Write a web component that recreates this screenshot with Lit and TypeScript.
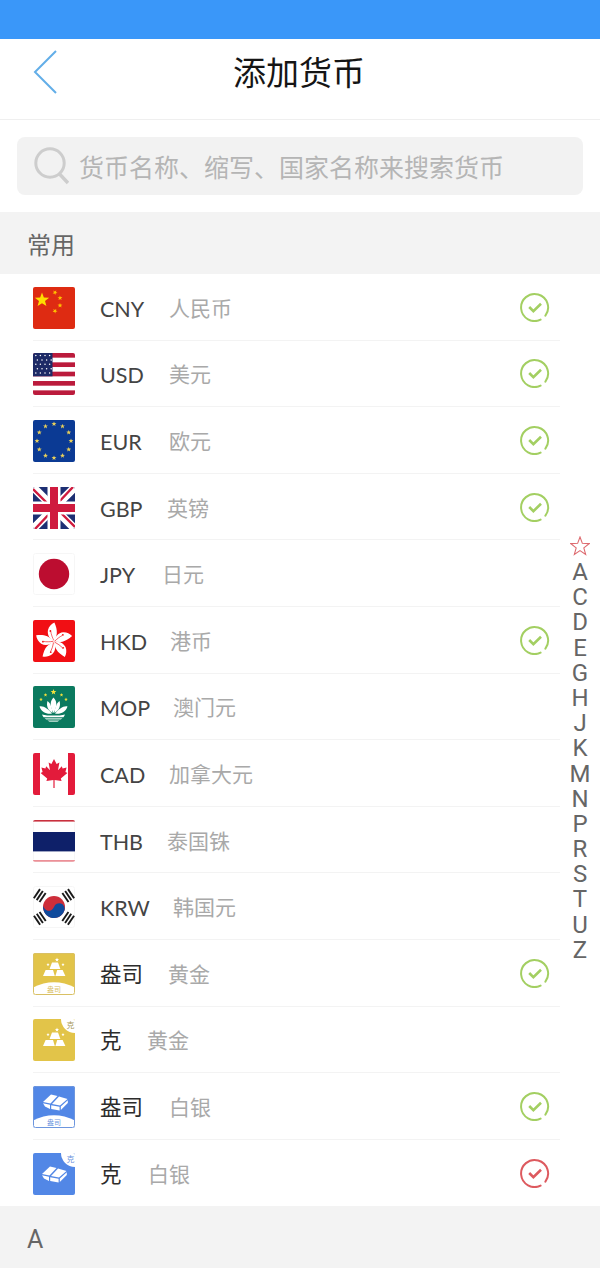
import { LitElement, html, css, svg } from 'lit';
import { customElement } from 'lit/decorators.js';

function starPoints(cx: number, cy: number, r: number, rot = -90) {
  const pts: string[] = [];
  for (let i = 0; i < 10; i++) {
    const rad = i % 2 === 0 ? r : r * 0.42;
    const a = ((rot + i * 36) * Math.PI) / 180;
    pts.push(`${(cx + rad * Math.cos(a)).toFixed(2)},${(cy + rad * Math.sin(a)).toFixed(2)}`);
  }
  return pts.join(' ');
}

const star = (cx: number, cy: number, r: number, fill: string, rot = -90) =>
  svg`<polygon points=${starPoints(cx, cy, r, rot)} fill=${fill}></polygon>`;

const cn = svg`
  <rect width="42" height="42" fill="#de2b12"></rect>
  ${star(9, 13, 7.5, '#ffde00')}
  ${star(22, 5.5, 2.6, '#ffc000', -60)}
  ${star(27, 11, 2.6, '#ffc000', -20)}
  ${star(27, 18.5, 2.6, '#ffc000', -90)}
  ${star(22, 24, 2.6, '#ffc000', -60)}`;

const usStars = () => {
  const out = [];
  for (let r = 0; r < 5; r++) {
    for (let c = 0; c < 4; c++) {
      out.push(svg`<circle cx=${2.8 + c * 4.6 + (r % 2 ? 1.6 : 0)} cy=${2.5 + r * 4.4} r="0.75" fill="#fff"></circle>`);
    }
  }
  return out;
};

const us = svg`
  <rect width="42" height="42" fill="#fff"></rect>
  ${[0, 2, 4, 6, 8].map((i) => svg`<rect y=${i * 4.67} width="42" height="4.67" fill="#bb1b3c"></rect>`)}
  <rect width="19.5" height="23.3" fill="#1d2a66"></rect>
  ${usStars()}`;

const euStars = () => {
  const out = [];
  for (let i = 0; i < 12; i++) {
    const a = (i * 30 * Math.PI) / 180;
    out.push(star(21 + 17 * Math.sin(a), 21 - 17 * Math.cos(a), 2.6, '#e8cf5a'));
  }
  return out;
};

const eu = svg`<rect width="42" height="42" fill="#0b3a94"></rect>${euStars()}`;

const gb = svg`
  <rect width="42" height="42" fill="#1d2f73"></rect>
  <path d="M0 0L42 42M42 0L0 42" stroke="#fff" stroke-width="8"></path>
  <path d="M0 2L17 19M42 40L25 23M40 0L24 17M2 42L18 25" stroke="#cf1b3f" stroke-width="2.4"></path>
  <path d="M21 0V42M0 21H42" stroke="#fff" stroke-width="13"></path>
  <path d="M21 0V42M0 21H42" stroke="#cf1b3f" stroke-width="8"></path>`;

const jp = svg`
  <rect x="0.5" y="0.5" width="41" height="41" rx="2" fill="#fff" stroke="#f6f6f6"></rect>
  <circle cx="21" cy="21" r="15.2" fill="#bc0d30"></circle>`;

const hkPetals = () => {
  const out = [];
  for (let i = 0; i < 5; i++) {
    out.push(svg`<g transform="rotate(${i * 72} 21 21.5)">
      <path d="M21 21.5C16.5 19 14 14.5 15 10C15.8 6.8 18.4 4 21.4 2.6C23 6.5 24.2 10 23.8 13.5C23.4 17 22.2 19 21 21.5Z" fill="#fff"></path>
      <path d="M20.8 20.5C19.4 17.5 18.2 14.5 17.8 11.5" stroke="#f10f14" stroke-width="0.6" fill="none"></path>
      <circle cx="17.4" cy="11" r="0.9" fill="#f10f14"></circle>
    </g>`);
  }
  return out;
};

const hk = svg`<rect width="42" height="42" fill="#f10f14"></rect>${hkPetals()}`;

const mo = svg`
  <rect width="42" height="42" fill="#0b7a5f"></rect>
  ${star(20.5, 6, 3, '#f6e23c')}
  ${star(12.5, 9, 1.9, '#f6e23c')}
  ${star(28.5, 9, 1.9, '#f6e23c')}
  ${star(8, 13.5, 1.9, '#f6e23c')}
  ${star(33, 13.5, 1.9, '#f6e23c')}
  <path d="M20.5 11.5C24 15 24.5 20 20.5 27C16.5 20 17 15 20.5 11.5Z" fill="#fff"></path>
  <path d="M14.5 15C17.5 17 19 22 19.6 27C15 24.5 13 20 14.5 15Z" fill="#fff"></path>
  <path d="M26.5 15C23.5 17 22 22 21.4 27C26 24.5 28 20 26.5 15Z" fill="#fff"></path>
  <path d="M6.5 20.5C10.5 19.5 15.5 23.5 19 27.6C13.5 28.6 8.5 26 6.5 20.5Z" fill="#fff"></path>
  <path d="M34.5 20.5C30.5 19.5 25.5 23.5 22 27.6C27.5 28.6 32.5 26 34.5 20.5Z" fill="#fff"></path>
  <path d="M9 28.4C15 30 26 30 32 28.4C31.6 29.6 31 30.6 30.4 31.2H10.6C10 30.6 9.4 29.6 9 28.4Z" fill="#fff"></path>
  <path d="M11.6 32.2H29.4L27.8 33.6H13.2ZM14.4 34.6H26.6L24.4 35.8H16.6Z" fill="#d5ebe3"></path>`;

const ca = svg`
  <rect width="42" height="42" fill="#fff"></rect>
  <rect width="7" height="42" fill="#e31b3b"></rect>
  <rect x="35" width="7" height="42" fill="#e31b3b"></rect>
  <path d="M21 6L23.6 11L26.4 9.6L25 17.2L28.8 13.2L29.6 15.4L33.6 14.6L32.4 19L34.4 20L27.8 25.6L28.6 28L21.6 27V35H20.4V27L13.4 28L14.2 25.6L7.6 20L9.6 19L8.4 14.6L12.4 15.4L13.2 13.2L17 17.2L15.6 9.6L18.4 11Z" fill="#e31b3b"></path>`;

const th = svg`
  <rect x="0.5" y="0.5" width="41" height="41" rx="2" fill="#fff" stroke="#f6f6f6"></rect>
  <rect width="42" height="1.6" fill="#c9303e"></rect>
  <rect y="12" width="42" height="19.4" fill="#0e2069"></rect>
  <rect y="40.2" width="42" height="1.4" fill="#e8767f"></rect>`;

const trigram = (cx: number, cy: number, rot: number) =>
  svg`<g transform="rotate(${rot} ${cx} ${cy})" fill="#1a1a1a">
    <rect x=${cx - 5.5} y=${cy - 4.4} width="11" height="1.9"></rect>
    <rect x=${cx - 5.5} y=${cy - 1} width="11" height="1.9"></rect>
    <rect x=${cx - 5.5} y=${cy + 2.4} width="11" height="1.9"></rect>
  </g>`;

const kr = svg`
  <rect x="0.5" y="0.5" width="41" height="41" rx="2" fill="#fff" stroke="#f6f6f6"></rect>
  ${trigram(6.8, 9.6, -56)}
  ${trigram(35.2, 9.6, 56)}
  ${trigram(6.8, 32.4, 56)}
  ${trigram(35.2, 32.4, -56)}
  <circle cx="21" cy="21" r="11" fill="#cd2e3a"></circle>
  <path d="M10.6 17.4A5.5 5.5 0 0 0 21 21A5.5 5.5 0 0 1 31.4 24.6A11 11 0 0 1 10.6 17.4Z" fill="#0f4a9c"></path>`;

const goldBars = svg`
  <path d="M16.6 16L19 9.6H25L27.4 16Z" fill="#fff"></path>
  <path d="M10 23L12.6 17H20L21.8 23Z" fill="#fff"></path>
  <path d="M22.4 23L24.2 17H29.6L32.4 23Z" fill="#fff"></path>
  ${star(24, 6.8, 2.2, '#fff')}
  ${star(15, 11.5, 1.7, '#fff')}
  ${star(30, 11.5, 1.7, '#fff')}`;

const silverBars = svg`
  <path d="M10 16L18 8.5L24.5 10L17.5 17.5Z" fill="#fff"></path>
  <path d="M19 18L26 10.5L34.5 13L27 19.5Z" fill="#fff"></path>
  <path d="M10 17.2L17 18.8V23L12 20.5Z" fill="#fff"></path>
  <path d="M18.2 19.2L26.6 20.8V24.4L18.2 23Z" fill="#fff"></path>
  <path d="M27.8 20.6L34.8 14.2V17L27.8 24Z" fill="#fff"></path>`;

const bottomTab = (color: string) => svg`
  <path d="M0 34.6Q21 24 42 34.6V42H0Z" fill="#fff"></path>
  <rect x="0.5" y="0.5" width="41" height="41" rx="2" fill="none" stroke=${color}></rect>
  <text x="21" y="39.4" text-anchor="middle" font-size="7" fill=${color} font-family="'Noto Sans CJK SC', sans-serif">盎司</text>`;

const cornerTab = (color: string) => svg`
  <circle cx="42" cy="0" r="14" fill="#fff"></circle>
  <text x="33.6" y="9" font-size="8" fill=${color} font-family="'Noto Sans CJK SC', sans-serif">克</text>`;

const goldOz = svg`<rect width="42" height="42" fill="#e2c449"></rect>${goldBars}${bottomTab('#d9c064')}`;
const goldG = svg`<rect width="42" height="42" fill="#e2c449"></rect><g transform="translate(0 4)">${goldBars}</g>${cornerTab('#a99a5c')}`;
const silverOz = svg`<rect width="42" height="42" fill="#5287e6"></rect>${silverBars}${bottomTab('#6d96de')}`;
const silverG = svg`<rect width="42" height="42" fill="#5287e6"></rect><g transform="translate(-1 5)">${silverBars}</g>${cornerTab('#6d96de')}`;

type Row = { flag: unknown; code: string; name: string; check?: 'green' | 'red'; cjk?: boolean; nameX: number };

// nameX is where the name column starts on the page for that row
const rows: Row[] = [
  { flag: cn, code: 'CNY', name: '人民币', check: 'green', nameX: 169 },
  { flag: us, code: 'USD', name: '美元', check: 'green', nameX: 169 },
  { flag: eu, code: 'EUR', name: '欧元', check: 'green', nameX: 169 },
  { flag: gb, code: 'GBP', name: '英镑', check: 'green', nameX: 167 },
  { flag: jp, code: 'JPY', name: '日元', nameX: 162 },
  { flag: hk, code: 'HKD', name: '港币', check: 'green', nameX: 170 },
  { flag: mo, code: 'MOP', name: '澳门元', nameX: 173 },
  { flag: ca, code: 'CAD', name: '加拿大元', nameX: 169 },
  { flag: th, code: 'THB', name: '泰国铢', nameX: 167 },
  { flag: kr, code: 'KRW', name: '韩国元', nameX: 173 },
  { flag: goldOz, code: '盎司', name: '黄金', check: 'green', cjk: true, nameX: 168 },
  { flag: goldG, code: '克', name: '黄金', cjk: true, nameX: 147 },
  { flag: silverOz, code: '盎司', name: '白银', check: 'green', cjk: true, nameX: 169 },
  { flag: silverG, code: '克', name: '白银', check: 'red', cjk: true, nameX: 148 },
];

const letters = ['A', 'C', 'D', 'E', 'G', 'H', 'J', 'K', 'M', 'N', 'P', 'R', 'S', 'T', 'U', 'Z'];

@customElement('app-root')
export class AppRoot extends LitElement {
  static styles = css`
    :host {
      display: block;
      position: relative;
      width: 600px;
      height: 1280px;
      overflow: hidden;
      background: #fff;
      font-family: 'Noto Sans CJK SC', sans-serif;
    }

    .status {
      height: 39px;
      background: #3a97f9;
    }

    .header {
      position: relative;
      height: 81px;
      box-sizing: border-box;
      padding-bottom: 17px;
      display: flex;
      align-items: center;
      justify-content: center;
      border-bottom: 1px solid #efefef;
    }

    .back {
      position: absolute;
      left: 32px;
      top: 10px;
      width: 26px;
      height: 46px;
    }

    .title {
      font-size: 33px;
      line-height: 40px;
      color: #151515;
      margin-left: -2px;
    }

    .search-wrap {
      height: 92px;
      box-sizing: border-box;
      padding: 17px;
    }

    .search {
      height: 58px;
      display: flex;
      align-items: center;
      background: #f2f2f2;
      border-radius: 8px;
      padding-left: 17px;
      gap: 10px;
    }

    .search svg {
      width: 35px;
      height: 38px;
      flex: none;
    }

    .placeholder {
      font-size: 25px;
      color: #b5b5b5;
      white-space: nowrap;
    }

    .section {
      height: 62px;
      display: flex;
      align-items: center;
      padding-left: 27px;
      background: #f3f3f3;
      color: #666;
      font-size: 24px;
    }

    .section.letter {
      height: 61.6px;
      box-sizing: border-box;
      padding-top: 5px;
      font-family: Roboto, sans-serif;
      font-size: 25px;
    }

    .row {
      height: 66.6px;
      box-sizing: border-box;
      margin: 0 40px 0 33px;
      display: flex;
      align-items: center;
      border-bottom: 1px solid #f3f3f3;
    }

    .row:last-child {
      border-bottom: none;
    }

    .flag {
      width: 42px;
      height: 42px;
      flex: none;
      border-radius: 2px;
      overflow: hidden;
      margin: 2px 25px 0 0;
    }

    .flag svg {
      display: block;
      width: 42px;
      height: 42px;
    }

    .code {
      font-family: Lato, 'Noto Sans CJK SC', sans-serif;
      font-size: 21.5px;
      line-height: 30px;
      margin-top: 4px;
      color: #444;
      white-space: nowrap;
      flex: none;
    }

    .code.cjk {
      font-family: 'Noto Sans CJK SC', sans-serif;
      font-size: 21.5px;
      margin-top: 0;
      color: #2c2c2c;
    }

    .name {
      font-size: 21px;
      line-height: 30px;
      color: #a9a9a9;
      white-space: nowrap;
    }

    .check {
      width: 30px;
      height: 30px;
      margin-left: auto;
      margin-right: 10px;
      flex: none;
    }

    .index {
      position: absolute;
      top: 536px;
      left: 565px;
      width: 30px;
      display: flex;
      flex-direction: column;
      align-items: center;
      font-family: Roboto, sans-serif;
      font-size: 24px;
      line-height: 25.2px;
      color: #666;
    }

    .index span {
      display: block;
      height: 25.2px;
    }

    .index svg {
      width: 20px;
      height: 20px;
      margin-bottom: 4px;
    }
  `;

  renderCheck(kind: 'green' | 'red') {
    const color = kind === 'red' ? '#dd5a5f' : '#a3cf62';
    return html`<svg class="check" viewBox="0 0 30 30" fill="none" stroke=${color}>
      <path d="M20.6 27.6A13.5 13.5 0 1 1 25.4 23.6" stroke-width="2" stroke-linecap="round"></path>
      <path d="M9.2 15L13.4 19.2L21 11.8" stroke-width="2.6"></path>
    </svg>`;
  }

  render() {
    return html`
      <div class="status"></div>
      <div class="header">
        <svg class="back" viewBox="0 0 26 46" fill="none" stroke="#62aee8" stroke-width="2">
          <path d="M24 2L3 23L24 44"></path>
        </svg>
        <div class="title">添加货币</div>
      </div>
      <div class="search-wrap">
        <div class="search">
          <svg viewBox="0 0 35 38" fill="none" stroke="#cdcdcd">
            <circle cx="16" cy="16" r="14.2" stroke-width="3"></circle>
            <path d="M25.5 27L34 36" stroke-width="3.4"></path>
          </svg>
          <span class="placeholder">货币名称、缩写、国家名称来搜索货币</span>
        </div>
      </div>
      <div class="section">常用</div>
      <div class="list">
        ${rows.map(
          (r) => html`
            <div class="row">
              <div class="flag"><svg viewBox="0 0 42 42">${r.flag}</svg></div>
              <span class="code ${r.cjk ? 'cjk' : ''}" style="width: ${r.nameX - 100}px">${r.code}</span>
              <span class="name">${r.name}</span>
              ${r.check ? this.renderCheck(r.check) : ''}
            </div>
          `
        )}
      </div>
      <div class="section letter">A</div>
      <div class="index">
        <svg viewBox="0 0 20 20" fill="none" stroke="#dd6a6f" stroke-width="1.1">
          <polygon points=${starPoints(10, 10.6, 9.6)}></polygon>
        </svg>
        ${letters.map((l) => html`<span>${l}</span>`)}
      </div>
    `;
  }
}
